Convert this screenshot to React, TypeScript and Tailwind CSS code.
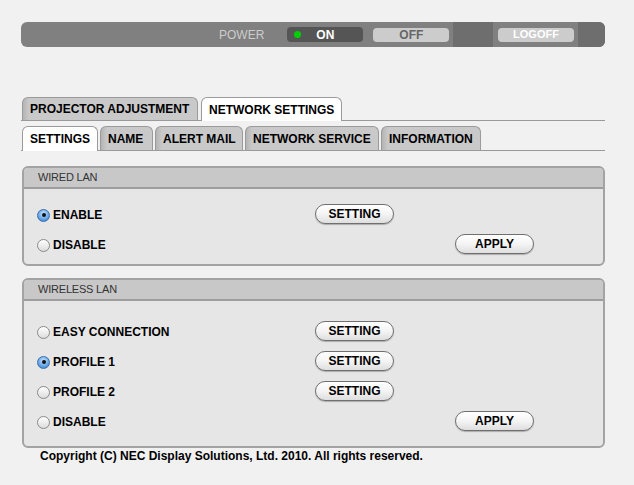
import type {JSX} from 'react';

const font = {fontFamily: '"Liberation Sans", Arial, sans-serif'};

function Radio({checked}: {checked?: boolean}): JSX.Element {
    if (checked) {
        return (
            <span className="w-[13px] h-[13px] rounded-full border border-[#3d6fa8] bg-[radial-gradient(circle_at_50%_35%,#cfe6ff_0%,#6aa8ea_55%,#2f76cc_100%)] flex items-center justify-center shrink-0">
                <span className="w-[4px] h-[4px] rounded-full bg-[#111]"/>
            </span>
        );
    }
    return (
        <span className="w-[13px] h-[13px] rounded-full border border-[#8a8a8a] bg-[linear-gradient(#ffffff,#dcdcdc)] shrink-0"/>
    );
}

function PillButton({label}: {label: string}): JSX.Element {
    return (
        <button
            className="w-[79px] h-[20px] -mt-[2px] rounded-full border border-[#6f6f6f] bg-[linear-gradient(#ffffff_0%,#f4f4f4_50%,#dedede_100%)] shadow-[0_1px_1px_rgba(0,0,0,0.25)] text-[12px] font-bold text-black leading-none flex items-center justify-center">
            {label}
        </button>
    );
}

// height: grey tab height; active tab gets one more pixel and covers the line
function Tab({label, active, width, height}: {label: string; active?: boolean; width: string; height: string}): JSX.Element {
    return (
        <div
            className={`${width} ${height} rounded-t-[6px] border border-b-0 border-[#9a9a9a] flex items-center pl-[7px] text-[12px] font-bold text-black ${active ? 'bg-white relative z-10 -mb-px' : 'bg-[linear-gradient(90deg,#b4b4b4_0px,#c9c9c9_6px,#c9c9c9_100%)]'}`}>
            {label}
        </div>
    );
}

interface RowData {
    label: string;
    checked?: boolean;
    setting?: boolean;
    apply?: boolean;
}

function Row({row}: {row: RowData}): JSX.Element {
    return (
        <div className="h-[30px] flex items-center">
            <div className="w-[291px] flex items-center gap-[3px] pl-[13px] shrink-0">
                <Radio checked={row.checked}/>
                <span className="text-[12px] font-bold text-black">{row.label}</span>
            </div>
            <div className="w-[140px] shrink-0">
                {row.setting && <PillButton label="SETTING"/>}
            </div>
            <div className="shrink-0">
                {row.apply && <PillButton label="APPLY"/>}
            </div>
        </div>
    );
}

function Panel({title, rows, padTop, padBottom}: {title: string; rows: RowData[]; padTop: string; padBottom: string}): JSX.Element {
    return (
        <div className="w-[583px] ml-px rounded-[6px] border-2 border-[#a3a3a3] bg-[#e6e6e6] overflow-hidden">
            <div className="h-[21px] bg-[#c8c8c8] border-b-2 border-[#9e9e9e] flex items-center pl-[14px] text-[11px] text-[#333] tracking-[-0.2px]">
                {title}
            </div>
            <div className={`${padTop} ${padBottom}`}>
                {rows.map((r) => <Row key={r.label + r.checked} row={r}/>)}
            </div>
        </div>
    );
}

export default function App(): JSX.Element {
    const wired: RowData[] = [
        {label: 'ENABLE', checked: true, setting: true},
        {label: 'DISABLE', apply: true},
    ];
    const wireless: RowData[] = [
        {label: 'EASY CONNECTION', setting: true},
        {label: 'PROFILE 1', checked: true, setting: true},
        {label: 'PROFILE 2', setting: true},
        {label: 'DISABLE', apply: true},
    ];

    return (
        <div className="w-[634px] h-[485px] bg-[#f1f1f1] overflow-hidden" style={font}>
            <div className="ml-[21px] w-[584px] pt-[22px]">
                {/* top bar */}
                <div className="h-[25px] rounded-[6px] bg-[#808080] flex overflow-hidden">
                    <div className="w-[432px] flex items-center">
                        <span className="ml-[198px] text-[12px] text-[#cccccc]">POWER</span>
                        <div className="ml-[23px] w-[76px] h-[15px] rounded-[4px] bg-[#555555] flex items-center">
                            <span className="ml-[7px] w-[7px] h-[7px] rounded-full bg-[#00d000]"/>
                            <span className="ml-[15px] text-[12px] font-bold text-white">ON</span>
                        </div>
                        <div className="ml-[10px] w-[76px] h-[14px] rounded-[4px] bg-[#cccccc] flex items-center justify-center text-[12px] font-bold text-[#666]">
                            OFF
                        </div>
                    </div>
                    <div className="w-[40px] bg-[#6e6e6e]"/>
                    <div className="w-[85px] flex items-center">
                        <div className="ml-[5px] w-[76px] h-[14px] rounded-[4px] bg-[#cccccc] flex items-center justify-center text-[11px] font-bold text-white">
                            LOGOFF
                        </div>
                    </div>
                    <div className="flex-1 bg-[#6e6e6e]"/>
                </div>

                {/* main tabs */}
                <div className="mt-[50px] flex items-end gap-[3px] pl-px border-b border-[#9a9a9a]">
                    <Tab label="PROJECTOR ADJUSTMENT" width="w-[176px]" height="h-[23px]"/>
                    <Tab label="NETWORK SETTINGS" width="w-[141px]" height="h-[24px]" active/>
                </div>

                {/* sub tabs */}
                <div className="mt-[5px] flex items-end gap-[2px] pl-px border-b border-[#9a9a9a]">
                    <Tab label="SETTINGS" width="w-[76px]" height="h-[25px]" active/>
                    <Tab label="NAME" width="w-[53px]" height="h-[24px]"/>
                    <Tab label="ALERT MAIL" width="w-[88px]" height="h-[24px]"/>
                    <Tab label="NETWORK SERVICE" width="w-[134px]" height="h-[24px]"/>
                    <Tab label="INFORMATION" width="w-[100px]" height="h-[24px]"/>
                </div>

                <div className="mt-[15px]">
                    <Panel title="WIRED LAN" rows={wired} padTop="pt-[11px]" padBottom="pb-[4px]"/>
                </div>
                <div className="mt-[12px]">
                    <Panel title="WIRELESS LAN" rows={wireless} padTop="pt-[16px]" padBottom="pb-[9px]"/>
                </div>

                <p className="-mt-px ml-[19px] text-[12px] font-bold text-black">
                    Copyright (C) NEC Display Solutions, Ltd. 2010. All rights reserved.
                </p>
            </div>
        </div>
    );
}
